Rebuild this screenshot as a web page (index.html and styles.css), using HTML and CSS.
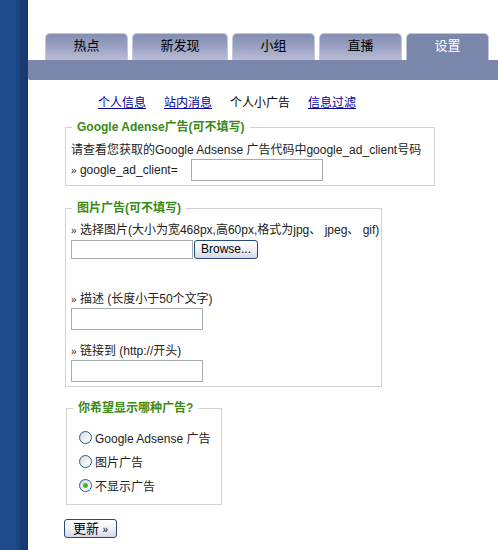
FILE: index.html
```html
<!DOCTYPE html>
<html lang="zh-CN">
<head>
    <meta charset="UTF-8">
    <meta name="viewport" content="width=device-width, initial-scale=1.0">
    <title>设置 - 个人小广告</title>
    <link rel="stylesheet" href="styles.css">
</head>
<body>
    <div class="page">
        <div class="side"></div>
        <div class="main">
            <ul class="tabs">
                <li class="tab">热点</li>
                <li class="tab tab-wide">新发现</li>
                <li class="tab">小组</li>
                <li class="tab">直播</li>
                <li class="tab active">设置</li>
            </ul>
            <div class="tabbar"></div>

            <div class="subnav">
                <a href="#">个人信息</a>
                <a href="#">站内消息</a>
                <span class="current">个人小广告</span>
                <a href="#">信息过滤</a>
            </div>

            <form class="settings">
                <fieldset class="box box-adsense">
                    <legend>Google Adense广告(可不填写)</legend>
                    <p class="line">请查看您获取的Google Adsense 广告代码中google_ad_client号码</p>
                    <div class="field-row">
                        <span><span class="raquo">»</span> google_ad_client=</span>
                        <input type="text" class="text-input" id="ad-client">
                    </div>
                </fieldset>

                <fieldset class="box box-image">
                    <legend>图片广告(可不填写)</legend>
                    <p class="line"><span class="raquo">»</span> 选择图片(大小为宽468px,高60px,格式为jpg、 jpeg、 gif)</p>
                    <div class="file-row">
                        <input type="text" class="file-name" readonly>
                        <button type="button" class="btn">Browse...</button>
                    </div>
                    <p class="line line-desc"><span class="raquo">»</span> 描述 (长度小于50个文字)</p>
                    <input type="text" class="text-input">
                    <p class="line line-link"><span class="raquo">»</span> 链接到 (http://开头)</p>
                    <input type="text" class="text-input">
                </fieldset>

                <fieldset class="box box-choice">
                    <legend>你希望显示哪种广告?</legend>
                    <label class="radio-row"><input type="radio" name="ad-type"> Google Adsense 广告</label>
                    <label class="radio-row"><input type="radio" name="ad-type"> 图片广告</label>
                    <label class="radio-row"><input type="radio" name="ad-type" checked> 不显示广告</label>
                </fieldset>

                <button type="submit" class="btn btn-submit">更新 <span class="raquo">»</span></button>
            </form>
        </div>
    </div>
</body>
</html>
```

FILE: styles.css
```css
html, body {
    margin: 0;
    padding: 0;
    background: #fff;
}
body {
    font-family: "Liberation Sans", "Noto Sans CJK SC", sans-serif;
    font-size: 12px;
    color: #222;
}
.page {
    display: flex;
    min-height: 550px;
}
.side {
    width: 28px;
    flex-shrink: 0;
    background: linear-gradient(to right, #1d4b8c 0, #1d4b8c 16px, #1b4581 16px, #1b4581 20px, #173b70 20px);
}
.main {
    flex: 1;
}

/* top tabs */
.tabs {
    display: flex;
    gap: 4px;
    list-style: none;
    margin: 33px 0 0 17px;
    padding: 0;
}
.tab {
    box-sizing: border-box;
    width: 83px;
    height: 27px;
    padding-top: 3px;
    line-height: 18px;
    font-size: 13px;
    text-align: center;
    color: #000;
    border: 1px solid #c3c7db;
    border-bottom: none;
    border-radius: 5px 5px 0 0;
    background: linear-gradient(to bottom, #858eb3 0, #9aa1c2 50%, #b9bdd5 100%);
}
.tab-wide {
    width: 96px;
}
.tab.active {
    background: #7b86ab;
    color: #fff;
}
.tabbar {
    height: 20px;
    background: #7b86ab;
    border-radius: 0 0 0 2px;
}

/* sub navigation */
.subnav {
    display: flex;
    gap: 18px;
    height: 18px;
    margin: 14px 0 0 70px;
    line-height: 18px;
}
.subnav a {
    color: #000099;
    text-decoration: underline;
}
.subnav .current {
    color: #000;
}

/* form */
.settings {
    margin-top: 7px;
}
.box {
    box-sizing: border-box;
    margin: 0 0 0 37px;
    padding: 6px 5px 4px;
    border: 1px solid #d3d3d3;
    min-width: 0;
}
.box legend {
    height: 16px;
    margin-left: 1px;
    padding: 0 5px;
    font-weight: bold;
    color: #3a8a14;
    line-height: 16px;
}
.box-adsense {
    width: 370px;
}
.box-image {
    width: 317px;
    margin-top: 14px;
    padding-top: 5px;
}
.box-choice {
    width: 156px;
    margin: 13px 0 0 38px;
    padding: 9px 5px 7px;
}
.line {
    height: 18px;
    margin: 0;
    line-height: 18px;
    white-space: nowrap;
}
.raquo {
    font-size: 10px;
}
.field-row {
    display: flex;
    align-items: center;
    gap: 13px;
    height: 22px;
}
.text-input, .file-name {
    box-sizing: border-box;
    display: block;
    width: 132px;
    height: 22px;
    margin: 0;
    border: 1px solid #a5acb2;
    background: #fff;
    font: inherit;
    padding: 1px 3px;
}
.file-row {
    display: flex;
    gap: 1px;
    height: 19px;
    margin-top: 1px;
}
.file-name {
    width: 122px;
    height: 19px;
}
.line-desc {
    margin-top: 31px;
}
.line-link {
    margin-top: 12px;
}

/* buttons */
.btn {
    box-sizing: border-box;
    height: 19px;
    padding: 0 6px;
    font-family: "Liberation Sans", "Noto Sans CJK SC", sans-serif;
    font-size: 12px;
    line-height: 15px;
    color: #000;
    border: 1px solid #244a7c;
    border-radius: 3px;
    background: linear-gradient(to bottom, #ffffff 0, #f2f2f5 50%, #d4d7e4 100%);
    cursor: pointer;
}
.file-row .btn {
    width: 64px;
    padding: 0;
}
.btn-submit {
    display: block;
    width: 53px;
    margin: 14px 0 0 36px;
    padding: 0;
    font-size: 13px;
}

/* radio rows */
.radio-row {
    display: flex;
    align-items: center;
    height: 24px;
    padding-left: 7px;
    white-space: nowrap;
}
.radio-row input {
    appearance: none;
    -webkit-appearance: none;
    box-sizing: border-box;
    width: 13px;
    height: 13px;
    margin: 0 3px 0 0;
    border: 1px solid #2b5a8c;
    border-radius: 50%;
    background: linear-gradient(135deg, #d6d6ce 0, #f4f4f0 60%, #ffffff 100%);
}
.radio-row input:checked {
    background: radial-gradient(circle, #27b127 0, #3fc43f 2px, transparent 3px),
                linear-gradient(135deg, #d6d6ce 0, #f4f4f0 60%, #ffffff 100%);
}
```
